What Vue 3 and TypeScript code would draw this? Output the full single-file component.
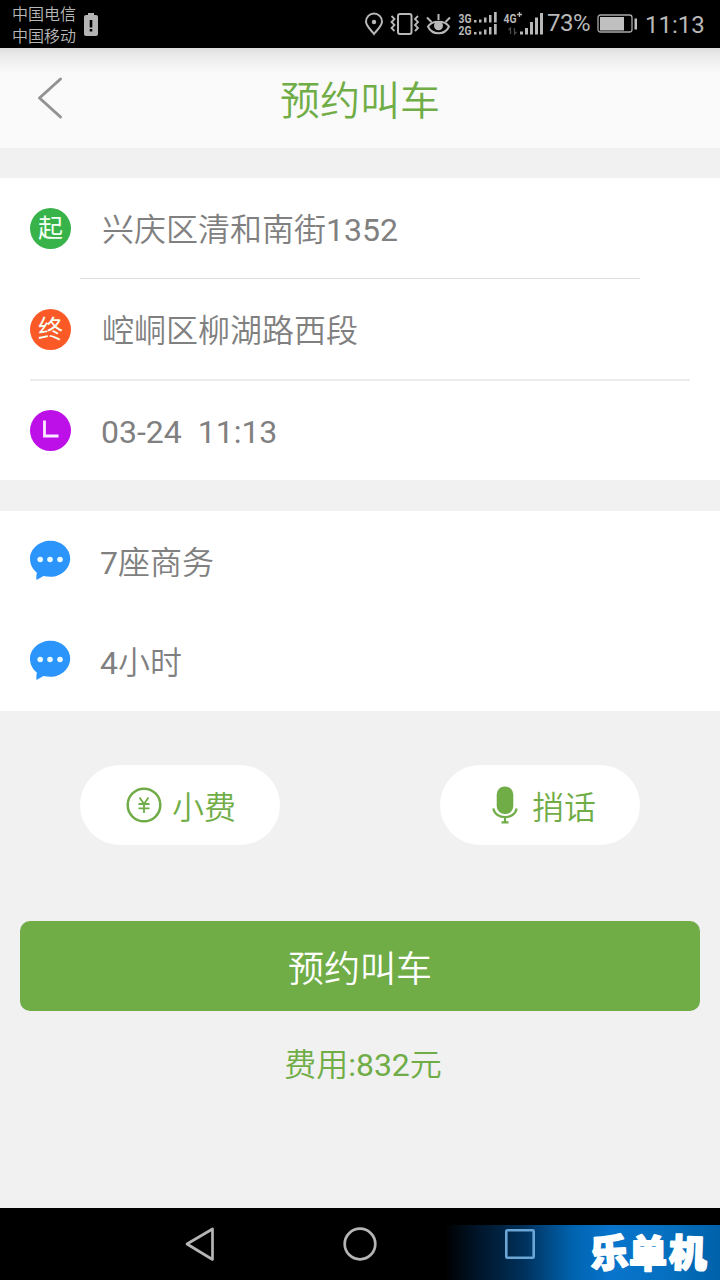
<script setup lang="ts">
interface Stop { kind: string; mark: string; text: string; digits: string }

const stops: Stop[] = [
  { kind: 'start', mark: '起', text: '兴庆区清和南街', digits: '1352' },
  { kind: 'end', mark: '终', text: '崆峒区柳湖路西段', digits: '' },
  { kind: 'time', mark: '', text: '', digits: '03-24\u00a0 11:13' },
]
const options: { digits: string; text: string }[] = [
  { digits: '7', text: '座商务' },
  { digits: '4', text: '小时' },
]
</script>

<template>
  <div class="screen">
    <header class="status">
      <div class="carriers"><span>中国电信</span><span>中国移动</span></div>
      <svg class="alert" width="14" height="24" viewBox="0 0 14 24">
        <path d="M4 0h6v2H4zM2 2h10q2 0 2 2v17q0 2-2 2H2q-2 0-2-2V4q0-2 2-2z" fill="#b4b4b4" />
        <path d="M5.700 7h2.600v7.500H5.700zM5.700 16h2.600v2.500H5.700z" fill="#000" />
      </svg>
      <svg class="indicators" width="182" height="48" viewBox="362 0 182 48">
        <g fill="none" stroke="#b8b8b8" stroke-width="2">
          <path d="M374 34C371 30 366 26 366 21.500a8 8 0 0 1 16 0C382 26 377 30 374 34Z" />
          <rect x="398" y="14" width="13.500" height="20" rx="2" />
          <path d="M391.500 16l3 3-3 3 3 3-3 3 3 3M418 16l-3 3 3 3-3 3 3 3-3 3" stroke-width="1.800" />
          <path d="M428 26.500C432 20 445 20 449 26.500C445 35.500 432 35.500 428 26.500Z" />
          <path d="M438.500 20v-6M431.500 22l-4.500-4.500M445.500 22l4.500-4.500" />
        </g>
        <circle cx="374" cy="22" r="2.200" fill="#b8b8b8" />
        <circle cx="438.500" cy="25.800" r="4.500" fill="#b8b8b8" />
        <g class="tiny" fill="#b8b8b8">
          <text x="458.500" y="22.500" textLength="13" lengthAdjust="spacingAndGlyphs">3G</text>
          <text x="458.500" y="35" textLength="13" lengthAdjust="spacingAndGlyphs">2G</text>
          <text x="503.500" y="22.500" textLength="13" lengthAdjust="spacingAndGlyphs">4G</text>
        </g>
        <path d="M517 14.500h5M519.500 12v5" stroke="#b8b8b8" stroke-width="1.300" />
        <path d="M474 20h2.500v2.500H474zM479 19.500h2.500v3H479zM484 17.500h2.500v5H484zM489 15h2.500v7.500H489zM494 12h2.700v10.500H494zM474 32h2.500v2.500H474zM479 31.500h2.500v3H479zM484 29.500h2.500v5H484zM489 27h2.500v7.500H489zM494 24h2.700v10.500H494zM520 31.500h3v3H520zM525 28h3v6.500H525zM530 22h3v12.500H530zM535 17.500h3v17H535zM540 13h3v21.500H540z" fill="#b8b8b8" />
        <path d="M510.500 34v-6l-2 2M514.500 28v6l2-2" fill="none" stroke="#4a4a4a" stroke-width="1.300" />
      </svg>
      <span class="percent">73%</span>
      <svg class="battery" width="42" height="20" viewBox="0 0 42 20">
        <rect x="1" y="1" width="34" height="17" rx="2.500" fill="none" stroke="#aaa" stroke-width="1.300" />
        <path d="M3 3h24v13.500H3zM37.500 4.500H40v11h-2.500z" fill="#c0c0c0" />
      </svg>
      <span class="clock">11:13</span>
    </header>

    <nav class="titlebar">
      <svg class="back" width="28" height="44" viewBox="0 0 28 44">
        <path d="M24.500 3L3.500 22L24.500 41" fill="none" stroke="#929292" stroke-width="3" stroke-linecap="round" stroke-linejoin="round" />
      </svg>
      <h1>预约叫车</h1>
    </nav>

    <section class="card trip">
      <div v-for="stop in stops" :key="stop.kind" class="row" :class="stop.kind">
        <span class="badge">
          <template v-if="stop.mark">{{ stop.mark }}</template>
          <svg v-else width="40" height="40" viewBox="0 0 40 40">
            <path d="M14.500 10.500v15.500H28.500" fill="none" stroke="#fbeaff" stroke-width="2.800" />
          </svg>
        </span>
        <span class="label"><span class="han">{{ stop.text }}</span>{{ stop.digits }}</span>
      </div>
    </section>

    <section class="card extras">
      <div v-for="option in options" :key="option.text" class="row">
        <svg class="bubble" width="41" height="41" viewBox="0 0 41 41">
          <path d="M20.500.7C31.500.7 40.200 8.800 40.200 18.500S31.500 36.800 20.500 36.800Q16.500 36.800 13.500 36L6.500 40Q6 37 6.800 32.500C2.700 29.500 0 24.200 0 18.500C0 8.800 9.500.7 20.500.7Z" fill="#2c95fb" />
          <g fill="#eafaff"><circle cx="10.200" cy="19.500" r="2.800" /><circle cx="20" cy="19.500" r="2.800" /><circle cx="30" cy="19.500" r="2.800" /></g>
        </svg>
        <span class="label">{{ option.digits }}<span class="han">{{ option.text }}</span></span>
      </div>
    </section>

    <div class="actions">
      <button class="pill tip" type="button">
        <svg width="36" height="36" viewBox="0 0 36 36" fill="none" stroke="#70ad47">
          <circle cx="18" cy="18" r="16.300" stroke-width="2.500" />
          <path d="M13.500 10.500L18 17L22.500 10.500M18 17V26M12.500 17h11M12.500 21.300h11" stroke-width="1.800" />
        </svg>
        <span class="han">小费</span>
      </button>
      <button class="pill voice" type="button">
        <svg width="26" height="38" viewBox="0 0 26 38">
          <rect x="4.700" y="0.500" width="16.600" height="27.500" rx="8" fill="#70ad47" />
          <path d="M1.300 22.500C3.500 34 22.500 34 24.700 22.500M13 31v5M9.500 36.300h7" fill="none" stroke="#70ad47" stroke-width="2.200" />
        </svg>
        <span class="han">捎话</span>
      </button>
    </div>

    <button class="submit han" type="button">预约叫车</button>
    <p class="fee"><span class="han">费用</span>:832<span class="han">元</span></p>

    <footer class="softkeys">
      <svg class="keys" width="720" height="72" viewBox="0 0 720 72" fill="none" stroke-width="2.700" stroke-linejoin="round">
        <path d="M187 36L212.500 21V51.500Z" stroke="#b5b5b5" />
        <circle cx="360" cy="36" r="15.300" stroke="#b5b5b5" />
      </svg>
      <div class="watermark">
        <svg width="290" height="55" viewBox="430 0 290 55">
          <rect x="506.300" y="5.300" width="27.400" height="27.400" rx="1" fill="none" stroke="#6ba6d6" stroke-width="2.600" />
          <g class="brand" fill="#fff" stroke="#fff" stroke-width="1.800" stroke-linejoin="round">
            <text x="590" y="42" transform="rotate(-4 608 28)">乐</text>
            <text x="629" y="42">单</text>
            <text x="669" y="42" transform="rotate(2 688 28)">机</text>
          </g>
        </svg>
      </div>
    </footer>
  </div>
</template>

<style>
html, body { margin: 0; background: #f1f1f1; }
</style>

<style scoped>
.screen {
  width: 720px; height: 1280px; overflow: hidden; display: flex; flex-direction: column;
  background: #f1f1f1; color: #808080;
  font-family: Roboto, "Noto Sans CJK SC", sans-serif; font-size: 32px; font-weight: 370;
}
button { border: 0; padding: 0; font: inherit; }
.han, h1, .carriers { font-family: "Noto Sans CJK SC DemiLight", "Noto Sans CJK SC", sans-serif; font-weight: 350; }
.status { height: 48px; flex: none; display: flex; background: #000; color: #b8b8b8; }
.carriers { width: 72px; margin-left: 12px; padding-top: 2px; display: flex; flex-direction: column; font-size: 16px; line-height: 22px; }
.alert { margin-top: 13px; }
.indicators { margin-left: 264px; }
.tiny { font-size: 12.500px; font-weight: 700; }
.percent { width: 47px; margin-left: 3px; font-size: 24px; line-height: 47px; letter-spacing: -.5px; }
.battery { margin: 14px 0 0 3px; }
.clock { margin-left: 6px; font-size: 24px; line-height: 51px; white-space: nowrap; }
.titlebar {
  height: 100px; flex: none; display: flex; align-items: center;
  background: linear-gradient(#dedede 0, #ebebeb 8px, #f4f4f4 18px, #fafafa 26px);
}
.back { margin-left: 36px; flex: none; }
h1 { margin: 0 64px 0 0; flex: 1; text-align: center; color: #70ad47; font-size: 40px; line-height: 60px; }
.card { background: #fff; flex: none; }
.trip { margin-top: 30px; height: 302px; }
.extras { margin-top: 31px; height: 200px; }
.row { height: 100px; padding-left: 30px; display: flex; align-items: center; position: relative; }
.start, .end { height: 101px; }
.start::after, .end::after { content: ""; position: absolute; bottom: 0; height: 1px; background: #dedede; left: 80px; right: 80px; }
.end::after { left: 30px; right: 30px; bottom: -1px; height: 2px; background: #ececec; }
.badge { width: 41px; height: 41px; margin-right: -1px; border-radius: 50%; color: #f4fff4; text-align: center; font-size: 25px; line-height: 42px; flex: none; }
.start .badge, .end .badge { margin-top: -1px; }
.time .badge { margin-top: 1px; }
.badge svg { display: block; }
.start .badge { background: #37b34a; }
.end .badge { background: #fb5a27; }
.time .badge { background: #bd10e8; }
.label { margin-left: 32px; line-height: 48px; white-space: pre; }
.time .label { margin-left: 31px; padding-top: 1px; }
.bubble { flex: none; margin-top: -2px; }
.extras .label { margin-left: 29px; }
.actions { margin-top: 54px; padding: 0 80px; display: flex; justify-content: space-between; flex: none; }
.pill { width: 200px; height: 80px; border-radius: 40px; background: #fff; color: #70ad47; display: flex; align-items: center; }
.pill span { line-height: 48px; }
.tip { padding-left: 46px; gap: 10px; }
.voice { padding-left: 52px; gap: 14px; }
.submit { margin: 76px 20px 0; height: 90px; border-radius: 10px; background: #70ad47; color: #fff; font-size: 36px; line-height: 54px; flex: none; }
.fee { margin: 27px 0 0; padding-left: 6px; text-align: center; color: #70ad47; line-height: 48px; }
.softkeys { margin-top: auto; height: 72px; flex: none; background: #000; display: grid; }
.keys, .watermark { grid-area: 1 / 1; }
.watermark {
  justify-self: end; align-self: end; width: 290px; height: 55px;
  background: linear-gradient(90deg, #000 5%, #001427 16%, #00305a 32%, #0063ae 49%, #0874cc 62%, #0671c1 80%, #0061aa 100%);
}
.watermark svg { display: block; }
.brand { font-size: 38px; font-weight: 900; }
</style>
